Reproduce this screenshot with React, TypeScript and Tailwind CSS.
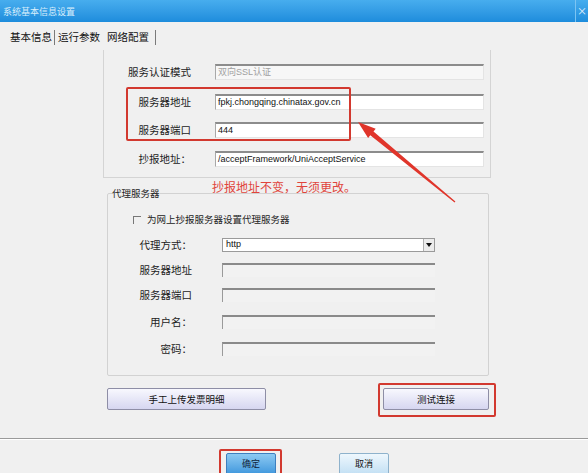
import React from 'react';

const cjk = { fontFamily: '"Noto Sans CJK SC", "Liberation Sans", sans-serif' };
const latin = { fontFamily: '"Liberation Sans", "Noto Sans CJK SC", sans-serif' };

type RowProps = {
	label: string;
	value?: string;
	muted?: boolean;
	mt: string;
};

function ServerRow({ label, value, muted, mt }: RowProps) {
	return (
		<div className={`flex h-[16px] items-center ${mt}`}>
			<div className="w-[87px] text-right text-[10.5px] leading-none text-[#222]">
				{label}
			</div>
			<div
				className={`ml-[24px] flex h-[16px] w-[269px] items-center border-t-2 border-l border-t-[#8c8c8c] border-l-[#a8a8a8] border-r border-b border-r-[#e4e4e4] border-b-[#e4e4e4] px-[2px] text-[9px] ${
					muted ? 'bg-[#f7f7f7] text-[#a0a0a0]' : 'bg-white text-[#111]'
				}`}
				style={latin}
			>
				{value}
			</div>
		</div>
	);
}

function ProxyRow({ label, mt }: { label: string; mt: string }) {
	return (
		<div className={`flex h-[14px] items-center ${mt}`}>
			<div className="w-[84px] text-right text-[10.5px] leading-none text-[#222]">
				{label}
			</div>
			<div className="ml-[30px] h-[14px] w-[213px] border-t-2 border-l border-t-[#8a8a8a] border-l-[#9a9a9a] bg-[#f2f2f2]" />
		</div>
	);
}

export default function App() {
	return (
		<div
			className="relative h-[473px] w-[588px] overflow-hidden bg-[#f0f0f0]"
			style={cjk}
		>
			{/* title bar */}
			<div className="flex h-[22px] items-center justify-between bg-gradient-to-b from-[#47adee] to-[#1d8cdc]">
				<span className="pl-[3px] text-[9px] leading-none text-[#d9eefb]">
					系统基本信息设置
				</span>
				<div className="flex h-full w-[13px] items-center justify-center border-l border-[#7cc4f2] text-[10px] leading-none text-[#e6f4fd]">
					×
				</div>
			</div>

			{/* tabs */}
			<div className="mt-[8px] flex h-[14px] items-center text-[10.5px] leading-none text-[#111]">
				<span className="ml-[10px]">基本信息</span>
				<span className="ml-[2px] h-[15px] w-px bg-[#7a7a7a]" />
				<span className="ml-[3px]">运行参数</span>
				<span className="ml-[7px]">网络配置</span>
				<span className="ml-[6px] h-[15px] w-px bg-[#7a7a7a]" />
			</div>

			{/* server panel */}
			<div className="ml-[103px] mt-[6px] h-[128px] w-[388px] border-r border-b border-l border-[#d4d4d4] pt-[14px]">
				<ServerRow label="服务认证模式" value="双向SSL认证" muted mt="mt-0" />
				<ServerRow
					label="服务器地址"
					value="fpkj.chongqing.chinatax.gov.cn"
					mt="mt-[14px]"
				/>
				<ServerRow label="服务器端口" value="444" mt="mt-[12px]" />
				<ServerRow
					label="抄报地址："
					value="/acceptFramework/UniAcceptService"
					mt="mt-[13px]"
				/>
			</div>

			{/* proxy group */}
			<fieldset className="ml-[107px] mt-[8px] w-[382px] rounded-[2px] border border-[#d2d2d2] pb-[19px]">
				<legend className="ml-[4px] text-[9.5px] leading-[14px] text-[#222]">
					代理服务器
				</legend>
				<div className="mt-[13px] flex h-[14px] items-center pl-[25px]">
					<span className="h-[8px] w-[8px] border-t border-l border-[#777]" />
					<span className="ml-[6px] text-[9.5px] leading-none text-[#222]">
						为网上抄报服务器设置代理服务器
					</span>
				</div>
				<div className="mt-[11px] flex h-[14px] items-center">
					<div className="w-[84px] text-right text-[10.5px] leading-none text-[#222]">
						代理方式：
					</div>
					<div className="ml-[30px] flex h-[14px] w-[213px] items-center border border-[#9a9a9a] bg-white">
						<span className="flex-1 pl-[3px] text-[9px] text-[#111]" style={latin}>
							http
						</span>
						<span className="flex h-full w-[11px] items-center justify-center border-l border-[#b0b0b0] bg-[#ececec]">
							<svg width="6" height="4" viewBox="0 0 6 4">
								<path d="M0 0h6L3 4z" fill="#111" />
							</svg>
						</span>
					</div>
				</div>
				<ProxyRow label="服务器地址" mt="mt-[11px]" />
				<ProxyRow label="服务器端口" mt="mt-[11px]" />
				<ProxyRow label="用户名：" mt="mt-[13px]" />
				<ProxyRow label="密码：" mt="mt-[13px]" />
			</fieldset>

			{/* action buttons */}
			<div className="mt-[12px] flex h-[22px]">
				<button className="ml-[107px] h-[22px] w-[159px] rounded-[2px] border border-[#8e8ea6] bg-gradient-to-b from-[#f8f8fe] to-[#d6d6f0] text-[9.5px] text-[#111]">
					手工上传发票明细
				</button>
				<button className="ml-[117px] h-[22px] w-[106px] rounded-[2px] border border-[#8e8ea6] bg-gradient-to-b from-[#f8f8fe] to-[#d6d6f0] text-[9.5px] text-[#111]">
					测试连接
				</button>
			</div>

			{/* separator */}
			<div className="mt-[28px] h-px w-full bg-[#9a9a9a]" />
			<div className="h-px w-full bg-white" />

			{/* dialog buttons */}
			<div className="mt-[13px] flex">
				<button className="ml-[226px] h-[22px] w-[50px] rounded-[2px] border border-[#3d7fbf] bg-gradient-to-b from-[#8ccaf2] to-[#3f98dd] text-[9px] text-[#10243a]">
					确定
				</button>
				<button className="ml-[63px] h-[22px] w-[50px] rounded-[2px] border border-[#8eb2cc] bg-gradient-to-b from-[#eef7fd] to-[#c3e0f4] text-[9px] text-[#111]">
					取消
				</button>
			</div>

			{/* annotations */}
			<div className="absolute left-[126px] top-[87px] h-[54px] w-[225px] rounded-[2px] border-2 border-[#d2392f]" />
			<div className="absolute left-[378px] top-[383px] h-[34px] w-[118px] rounded-[2px] border-2 border-[#d2392f]" />
			<div className="absolute left-[219px] top-[449px] h-[30px] w-[63px] rounded-[2px] border-2 border-[#d2392f]" />
			<div className="absolute left-[212px] top-[179px] text-[12px] leading-[16px] text-[#e0453c]">
				抄报地址不变，无须更改。
			</div>
			<svg
				className="pointer-events-none absolute left-0 top-0"
				width="588"
				height="473"
				viewBox="0 0 588 473"
			>
				<polygon
					points="358,122 368.1,138 370.3,135.3 454.6,202.5 455.4,201.5 373.5,131.5 375.7,128.8"
					fill="#e0352b"
				/>
			</svg>
		</div>
	);
}
